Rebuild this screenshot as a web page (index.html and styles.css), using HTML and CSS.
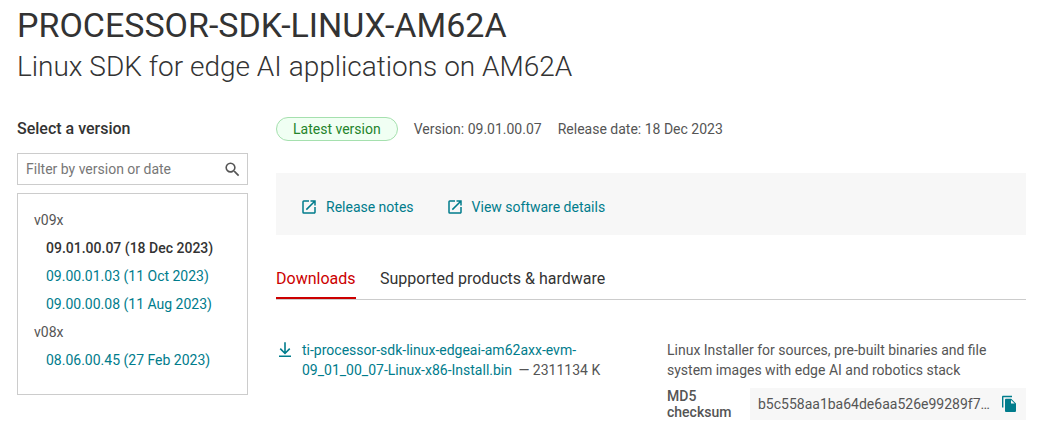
FILE: index.html
```html
<!DOCTYPE html>
<html lang="en">
<head>
    <meta charset="utf-8">
    <title>PROCESSOR-SDK-LINUX-AM62A</title>
    <link rel="stylesheet" href="styles.css">
</head>
<body>
    <h1>PROCESSOR-SDK-LINUX-AM62A</h1>
    <h2>Linux SDK for edge AI applications on AM62A</h2>

    <div class="content">
        <aside class="sidebar">
            <h3>Select a version</h3>
            <div class="filter">
                <input type="text" placeholder="Filter by version or date">
                <svg class="search-icon" viewBox="0 0 24 24"><path d="M15.5 14h-.79l-.28-.27A6.471 6.471 0 0 0 16 9.5 6.5 6.5 0 1 0 9.5 16c1.61 0 3.09-.59 4.23-1.57l.27.28v.79l5 4.99L20.49 19l-4.99-5zm-6 0C7.01 14 5 11.99 5 9.5S7.01 5 9.5 5 14 7.01 14 9.5 11.99 14 9.5 14z"/></svg>
            </div>
            <ul class="versions">
                <li class="group">v09x</li>
                <li class="version current">09.01.00.07 (18 Dec 2023)</li>
                <li class="version"><a href="#">09.00.01.03 (11 Oct 2023)</a></li>
                <li class="version"><a href="#">09.00.00.08 (11 Aug 2023)</a></li>
                <li class="group">v08x</li>
                <li class="version"><a href="#">08.06.00.45 (27 Feb 2023)</a></li>
            </ul>
        </aside>

        <main>
            <div class="release-info">
                <span class="badge">Latest version</span>
                <span>Version: 09.01.00.07</span>
                <span>Release date: 18 Dec 2023</span>
            </div>

            <div class="links">
                <a href="#">
                    <svg class="open-icon" viewBox="0 0 24 24"><path d="M19 19H5V5h7V3H5a2 2 0 0 0-2 2v14a2 2 0 0 0 2 2h14c1.1 0 2-.9 2-2v-7h-2v7zM14 3v2h3.59l-9.83 9.83 1.41 1.41L19 6.41V10h2V3h-7z"/></svg>
                    Release notes
                </a>
                <a href="#">
                    <svg class="open-icon" viewBox="0 0 24 24"><path d="M19 19H5V5h7V3H5a2 2 0 0 0-2 2v14a2 2 0 0 0 2 2h14c1.1 0 2-.9 2-2v-7h-2v7zM14 3v2h3.59l-9.83 9.83 1.41 1.41L19 6.41V10h2V3h-7z"/></svg>
                    View software details
                </a>
            </div>

            <div class="tabs">
                <div class="tab active">Downloads</div>
                <div class="tab">Supported products &amp; hardware</div>
            </div>

            <div class="download">
                <svg class="download-icon" viewBox="0 0 18 18"><path d="M8.2 1.2h1.6v9.3l3.4-3.4 1.1 1.1L9 13.4 3.7 8.2l1.1-1.1 3.4 3.4zM3 14.4h12V16H3z"/></svg>
                <div class="file">
                    <a href="#">ti-processor-sdk-linux-edgeai-am62axx-evm-<br>09_01_00_07-Linux-x86-Install.bin</a>
                    <span class="size">— 2311134 K</span>
                </div>
                <div class="details">
                    <p>Linux Installer for sources, pre-built binaries and file system images with edge AI and robotics stack</p>
                    <div class="checksum">
                        <strong>MD5 checksum</strong>
                        <div class="hash">
                            <span>b5c558aa1ba64de6aa526e99289f7…</span>
                            <svg class="copy-icon" viewBox="0 0 18 18"><path d="M12 .8H3.2C2.4 .8 2 1.3 2 2v10.5h1.4V2.2H12zM11.2 3.8H6.2C5.4 3.8 5 4.3 5 5v10.8c0 .8.5 1.3 1.2 1.3h8.5c.8 0 1.3-.5 1.3-1.3V8.4zM11 5v3.5h3.7z" fill-rule="evenodd"/></svg>
                        </div>
                    </div>
                </div>
            </div>
        </main>
    </div>
</body>
</html>
```
FILE: styles.css
```css
* {
    box-sizing: border-box;
}

body {
    font-family: Roboto, Arial, sans-serif;
    font-size: 14px;
    line-height: 20px;
    color: #555;
    background: #fff;
    margin: 0;
    padding: 4px 11px 0 17px;
    overflow: hidden;
}

h1 {
    margin: 0;
    font-size: 34px;
    font-weight: 400;
    line-height: 42px;
    color: #333;
}

h2 {
    margin: 0;
    font-size: 28px;
    font-weight: 300;
    line-height: 42px;
    color: #333;
}

a {
    color: #007c8c;
    text-decoration: none;
}

svg {
    flex: none;
    fill: #007c8c;
}

.content {
    display: flex;
    gap: 28px;
    margin-top: 29px;
}

.sidebar {
    width: 231px;
    flex: none;
}

.sidebar h3 {
    margin: 0 0 13px;
    font-size: 16px;
    font-weight: 500;
    line-height: 23px;
    color: #333;
}

.filter {
    display: flex;
    align-items: center;
    height: 32px;
    padding: 0 5px 0 8px;
    border: 1px solid #ccc;
}

.filter input {
    flex: 1;
    min-width: 0;
    padding: 0;
    border: none;
    outline: none;
    font: inherit;
}

.filter input::placeholder {
    color: #777;
}

.search-icon {
    width: 19px;
    height: 19px;
    fill: #555;
}

.versions {
    height: 202px;
    margin: 8px 0 0;
    padding: 12px 16px;
    border: 1px solid #ccc;
    list-style: none;
    line-height: 28px;
}

.version {
    padding-left: 12px;
}

.current {
    font-weight: 500;
    color: #333;
}

main {
    flex: 1;
    min-width: 0;
}

.release-info {
    display: flex;
    align-items: center;
    gap: 16px;
    height: 24px;
}

.badge {
    height: 24px;
    padding: 0 16px;
    border: 1px solid #a5e0ae;
    border-radius: 12px;
    background: #f0fff3;
    color: #24842b;
    line-height: 22px;
}

.links {
    display: flex;
    align-items: center;
    gap: 32px;
    height: 62px;
    margin-top: 32px;
    padding: 6px 24px 0;
    background: #f7f7f7;
}

.links a {
    display: flex;
    align-items: center;
    gap: 8px;
}

.open-icon {
    width: 18px;
    height: 18px;
}

.tabs {
    display: flex;
    gap: 24px;
    height: 65px;
    padding-top: 32px;
    border-bottom: 1px solid #ccc;
    font-size: 16px;
    line-height: 24px;
    color: #333;
}

.tab {
    height: 32px;
}

.active {
    min-width: 80px;
    color: #c00;
    border-bottom: 2px solid #c00;
}

.download {
    display: flex;
    padding-top: 40px;
}

.download-icon {
    width: 18px;
    height: 18px;
    margin-top: 1px;
}

.file {
    width: 373px;
    padding-left: 8px;
}

.size {
    margin-left: 3px;
}

.details {
    flex: 1;
    min-width: 0;
}

.details p {
    margin: 0 0 8px;
}

.checksum {
    display: flex;
    align-items: center;
    justify-content: space-between;
}

.checksum strong {
    width: 70px;
    font-weight: 500;
    line-height: 16px;
}

.hash {
    display: flex;
    align-items: center;
    justify-content: space-between;
    width: 276px;
    height: 32px;
    padding: 0 8px;
    background: #f7f7f7;
}

.copy-icon {
    width: 18px;
    height: 18px;
}
```
